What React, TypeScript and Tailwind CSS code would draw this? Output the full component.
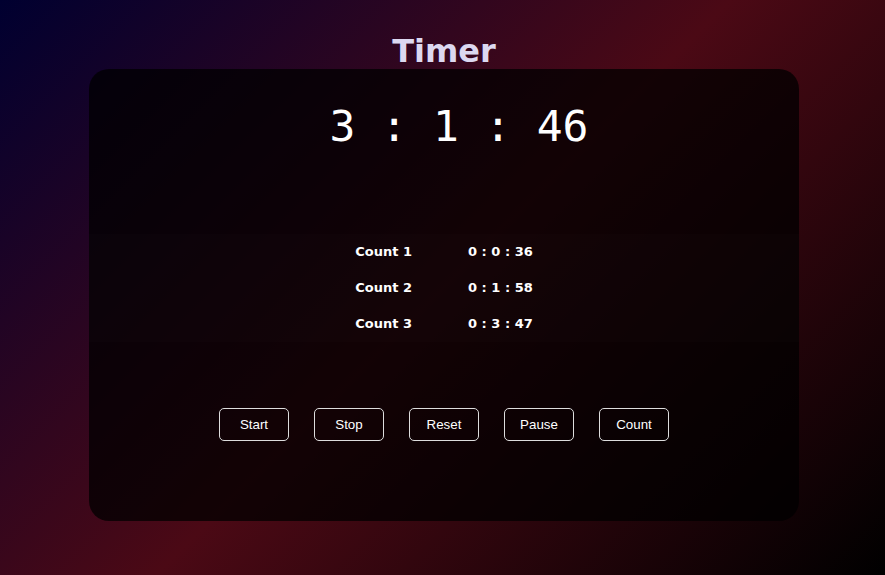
const counts = [
  { label: 'Count 1', time: '0 : 0 : 36' },
  { label: 'Count 2', time: '0 : 1 : 58' },
  { label: 'Count 3', time: '0 : 3 : 47' },
];

const buttons = ['Start', 'Stop', 'Reset', 'Pause', 'Count'];

export default function App() {
  return (
    <div className="min-h-screen w-full bg-[linear-gradient(135deg,#000030_0%,#4b0915_50%,#000000_100%)] pt-[33px]">
      <h1 className="text-center text-[32px] leading-[37px] font-bold text-[#dcd8f0] font-['DejaVu_Sans',sans-serif] pl-[3px]">
        Timer
      </h1>

      {/* Card */}
      <div className="ml-[89px] -mt-px w-[710px] h-[452px] rounded-[20px] bg-black/75 pt-[32px] flex flex-col">
        <div className="text-center pl-[30px] text-[43px] leading-[50px] text-white font-['DejaVu_Sans_Mono',monospace] whitespace-pre">
          3 : 1 : 46
        </div>

        <div className="mt-[83px] bg-white/[0.012] flex justify-center">
          <div className="grid grid-cols-[auto_auto] gap-x-[56px] font-['DejaVu_Sans',sans-serif] text-[13px] font-bold text-white">
            {counts.map((c) => (
              <div key={c.label} className="contents">
                <div className="h-[36px] flex items-center">{c.label}</div>
                <div className="h-[36px] flex items-center whitespace-pre">{c.time}</div>
              </div>
            ))}
          </div>
        </div>

        <div className="mt-[66px] flex justify-center gap-[25px]">
          {buttons.map((b) => (
            <button
              key={b}
              className="w-[70px] h-[33px] rounded-[5px] border border-[#dddddd] text-white text-[13.33px] font-['Liberation_Sans',Arial,sans-serif]"
            >
              {b}
            </button>
          ))}
        </div>
      </div>
    </div>
  );
}
